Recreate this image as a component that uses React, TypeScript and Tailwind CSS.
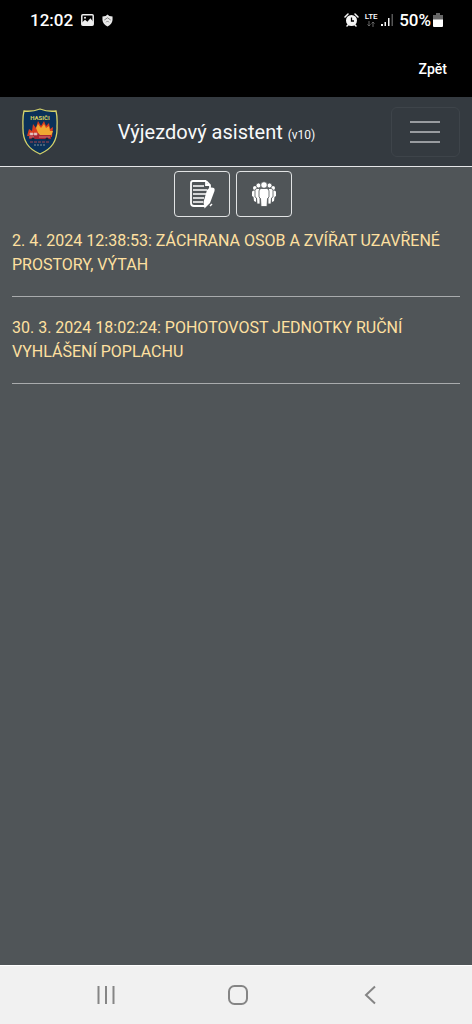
import type { ReactNode } from "react";

type Dispatch = {
  time: string;
  title: string;
};

const DISPATCHES: Dispatch[] = [
  { time: "2. 4. 2024 12:38:53", title: "ZÁCHRANA OSOB A ZVÍŘAT UZAVŘENÉ PROSTORY, VÝTAH" },
  { time: "30. 3. 2024 18:02:24", title: "POHOTOVOST JEDNOTKY RUČNÍ VYHLÁŠENÍ POPLACHU" },
];

function StatusBar() {
  return (
    <div className="flex h-10 items-center justify-between pr-[29px] pl-[30px] text-white">
      <div className="flex items-center gap-2">
        <span className="text-[17px] leading-6 font-medium">12:02</span>
        <svg className="h-3 w-[13px]" viewBox="0 0 13 12">
          <rect x="0.8" y="0.8" width="11.4" height="10.4" rx="1" fill="none" stroke="#eee" strokeWidth="1.5" />
          <path d="M1 11V8.5l3-2.7 2.4 2 3-3.6L12 7.5V11z" fill="#eee" />
          <circle cx="4" cy="3.8" r="1" fill="#eee" />
        </svg>
        <svg className="h-[13px] w-[11px]" viewBox="0 0 12 13">
          <path d="M6 0 8 1.500 11.500 2V6Q11 10.500 6 13Q1 10.500 .5 6V2L4 1.500z" fill="#e8e8e8" />
          <path d="M2.500 6 6 3.500 9.500 6M4.500 8.500 6 7 7.500 8.500" fill="none" stroke="#777" strokeWidth="1" />
        </svg>
      </div>
      <div className="flex items-center">
        <svg className="h-[14px] w-[15px]" viewBox="0 0 15 14">
          <circle cx="7.500" cy="7.500" r="5.500" fill="#f5f5f5" />
          <path d="M7.500 4.500V8H10" fill="none" stroke="#000" strokeWidth="1.300" />
          <path d="M1 4 4 1M14 4 11 1M3 13 4.500 11.500M12 13 10.500 11.500" stroke="#f5f5f5" strokeWidth="1.500" strokeLinecap="round" />
        </svg>
        <div className="ml-1 flex w-4 flex-col items-center">
          <span className="text-[8px] leading-2 font-medium">LTE</span>
          <svg className="h-[6px] w-2" viewBox="0 0 8 6" fill="none" stroke="#666" strokeWidth="1">
            <path d="M2 0V5M0.500 3.500 2 5 3.500 3.500M6 6V1M4.500 2.500 6 1 7.500 2.500" />
          </svg>
        </div>
        <svg className="ml-[2px] h-3 w-3" viewBox="0 0 12 12">
          <path d="M0 10h2v2H0zM3.500 8h1.500v4H3.500zM7 4h1.500v8H7z" fill="#f5f5f5" />
          <path d="M10.500 0H12v12h-1.500z" fill="#555" />
        </svg>
        <span className="ml-[6px] text-[17px] leading-6 font-medium">50%</span>
        <svg className="ml-[2px] h-[14px] w-[10px]" viewBox="0 0 10 14">
          <path d="M3 0h4v2h3v5H0V2h3z" fill="#666" />
          <path d="M0 6.500h10V13q0 1-1 1H1q-1 0-1-1z" fill="#fff" />
        </svg>
      </div>
    </div>
  );
}

function Crest() {
  return (
    <svg className="h-[47px] w-9" viewBox="0 0 36 47" role="img" aria-label="Hasiči">
      <path
        d="M18 1Q26 4 34 3Q35.500 9 35 18Q35.500 29 31 36Q27 42 18 46Q9 42 5 36Q.5 29 1 18Q.5 9 2 3Q10 4 18 1Z"
        fill="#0b3159"
        stroke="#d6d36a"
        strokeWidth="1.300"
      />
      <text x="18" y="12" textAnchor="middle" fontSize="6" fontWeight="700" fill="#d9d25e">
        HASIČI
      </text>
      <path d="M5 28 7 21 10 23 11 16 14 20 16 13 19 18 22 13 24 18 27 15 28 21 31 19 30 29z" fill="#d93c20" />
      <path d="M14 20 16 16 19 20 22 16 24 20 27 18 28 23 31 23 29 28 17 27z" fill="#f0a832" />
      <path d="M8 25h8l2 2h11v4H7z" fill="#a92632" />
      <path d="M8 25h3v2H8zM12 25h3v2h-3zM7 29h5M17 29h11" fill="#e6d6d5" stroke="#dca59d" strokeWidth="0.700" />
      <circle cx="11" cy="31" r="1.500" fill="#152539" />
      <circle cx="25" cy="31" r="1.500" fill="#152539" />
      <path d="M8 34h20" stroke="#a34551" strokeWidth="1" strokeDasharray="3 1" />
      <path d="M12 37h12" stroke="#819198" strokeWidth="1" strokeDasharray="2 1" />
    </svg>
  );
}

function NotesIcon() {
  return (
    <svg className="h-[30px] w-[26px]" viewBox="0 0 26 30" fill="none" stroke="#fff">
      <path d="M17 2H4Q2 2 2 4V24Q2 27 5 27H17M17 2 21 6V10M17 2V6H21" strokeWidth="1.800" />
      <path d="M4 7h11M4 11h14M4 15h13M4 19h11M4 23h10" strokeWidth="1.700" />
      <path d="M18 11Q21 7.500 25 9Q26 10 25.500 12L21 24 15.500 29.500 14.500 23z" fill="#fff" stroke="none" />
      <path d="M21 27 23 25" strokeWidth="1.500" />
    </svg>
  );
}

function CrewIcon() {
  return (
    <svg className="h-[26px] w-[26px]" viewBox="0 0 26 26" fill="#fff">
      <circle cx="4" cy="7" r="2" />
      <circle cx="22" cy="7" r="2" />
      <path d="M1 11Q1 9.500 3 9.500H5V21L3 20 2.500 16 1 15zM25 11Q25 9.500 23 9.500H21V21L23 20 23.500 16 25 15z" />
      <g stroke="#505558" strokeWidth="0.800">
        <circle cx="7.500" cy="4.500" r="2.500" />
        <circle cx="18.500" cy="4.500" r="2.500" />
        <path d="M4 9.500Q4 7.500 6 7.500H9V23H6L5.500 17 4 16zM22 9.500Q22 7.500 20 7.500H17V23H20L20.500 17 22 16z" />
        <circle cx="13" cy="4" r="3.300" />
        <path d="M8 10Q8 7.500 10.500 7.500H15.500Q18 7.500 18 10V16L16.500 17.500 16 25.500H10L9.500 17.500 8 16z" />
      </g>
    </svg>
  );
}

function ToolButton({ label, children }: { label: string; children: ReactNode }) {
  return (
    <button
      type="button"
      aria-label={label}
      className="mr-[6px] flex h-[46px] w-14 items-center justify-center rounded border border-[#e1e3e4]"
    >
      {children}
    </button>
  );
}

function NavigationBar() {
  return (
    <nav className="grid h-[59px] grid-cols-3 place-items-center border-t border-white bg-[#f1f1f1] pr-9 pl-10 text-[#858585]">
      <button type="button" aria-label="Poslední aplikace">
        <svg className="h-5 w-5" viewBox="0 0 20 20" fill="none" stroke="currentColor" strokeWidth="2">
          <path d="M2.500 1v18M10 1v18M17.500 1v18" />
        </svg>
      </button>
      <button type="button" aria-label="Domů">
        <svg className="h-5 w-5" viewBox="0 0 20 20" fill="none" stroke="currentColor" strokeWidth="2">
          <rect x="1" y="1" width="18" height="18" rx="5.500" />
        </svg>
      </button>
      <button type="button" aria-label="O krok zpět">
        <svg className="h-5 w-5" viewBox="0 0 20 20" fill="none" stroke="currentColor" strokeWidth="2">
          <path d="M15 1.500 6 10l9 8.500" />
        </svg>
      </button>
    </nav>
  );
}

export default function App() {
  return (
    <div className="flex min-h-screen flex-col bg-[#505558] font-[Roboto,sans-serif]">
      <div className="bg-black">
        <StatusBar />
        <div className="flex h-[57px] items-center justify-end pr-[25px]">
          <button type="button" className="text-sm font-medium text-white">
            Zpět
          </button>
        </div>
      </div>

      <header className="flex h-[70px] items-center justify-between border-b border-[#e5e6e8] bg-[#343a40] pr-3 pl-[22px]">
        <Crest />
        <h1 className="pr-4 text-xl leading-[30px] text-[#f8f9fa]">
          Výjezdový asistent <span className="text-xs">(v10)</span>
        </h1>
        <button
          type="button"
          aria-label="Menu"
          className="flex h-[50px] w-[69px] items-center justify-center rounded-md border border-[#3e444a]"
        >
          <svg className="h-[30px] w-[30px]" viewBox="0 0 30 30" stroke="#999ca0" strokeWidth="2">
            <path d="M0 5h30M0 15h30M0 25h30" />
          </svg>
        </button>
      </header>

      <main className="flex-1 px-3 pt-1">
        <div className="mb-3 flex justify-center">
          <ToolButton label="Záznamy">
            <NotesIcon />
          </ToolButton>
          <ToolButton label="Jednotka">
            <CrewIcon />
          </ToolButton>
        </div>

        {/* Dispatch list */}
        <ul>
          {DISPATCHES.map((d) => (
            <li key={d.time} className="mb-[19px] border-b border-[#a9abad] pb-[19px]">
              <a href="#" className="block text-base leading-6 text-[#ffe0a0]">
                {`${d.time}: ${d.title}`}
              </a>
            </li>
          ))}
        </ul>
      </main>

      <NavigationBar />
    </div>
  );
}
